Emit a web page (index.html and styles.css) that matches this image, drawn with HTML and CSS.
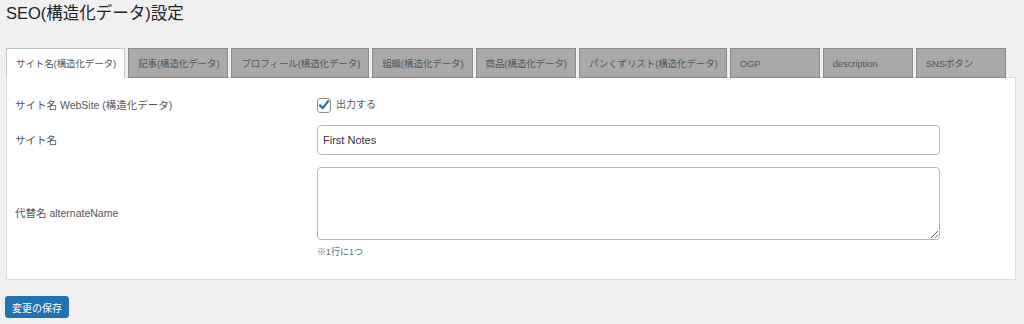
FILE: index.html
```html
<!DOCTYPE html>
<html lang="ja">
<head>
    <meta charset="UTF-8">
    <meta name="viewport" content="width=device-width, initial-scale=1.0">
    <title>SEO(構造化データ)設定</title>
    <link rel="stylesheet" href="styles.css">
</head>
<body>
    <div class="wrap">
        <h1>SEO(構造化データ)設定</h1>

        <nav class="tabs">
            <span class="tab active">サイト名(構造化データ)</span>
            <span class="tab">記事(構造化データ)</span>
            <span class="tab">プロフィール(構造化データ)</span>
            <span class="tab">組織(構造化データ)</span>
            <span class="tab">商品(構造化データ)</span>
            <span class="tab">パンくずリスト(構造化データ)</span>
            <span class="tab wide">OGP</span>
            <span class="tab wide">description</span>
            <span class="tab wide">SNSボタン</span>
        </nav>

        <div class="panel">
            <div class="form-table">
                <div class="label">サイト名 WebSite (構造化データ)</div>
                <div class="field">
                    <label class="check">
                        <span class="box">
                            <svg width="12" height="12" viewBox="0 0 12 12"><path d="M2 6.4 L4.8 9.2 L10.2 2.2" fill="none" stroke="#2271b1" stroke-width="2.2" stroke-linecap="round" stroke-linejoin="round"/></svg>
                        </span>
                        出力する
                    </label>
                </div>

                <div class="label">サイト名</div>
                <div class="field">
                    <input type="text" class="text-input" value="First Notes">
                </div>

                <div class="label">代替名 alternateName</div>
                <div class="field">
                    <textarea class="text-area"></textarea>
                    <p class="note">※1行に1つ</p>
                </div>
            </div>
        </div>

        <button class="save">変更の保存</button>
    </div>
</body>
</html>
```

FILE: styles.css
```css
body {
    margin: 0;
    background-color: #f0f0f1;
    font-family: "Liberation Sans", "Noto Sans CJK JP", sans-serif;
    color: #3c434a;
}
.wrap {
    padding: 0 8px 0 6px;
}
h1 {
    margin: 0;
    padding-top: 2px;
    font-size: 16.5px;
    font-weight: 400;
    line-height: 22px;
    color: #1d2327;
}
.tabs {
    display: flex;
    gap: 3px;
    margin-top: 24px;
    position: relative;
    z-index: 1;
}
.tab {
    box-sizing: border-box;
    flex-shrink: 0;
    white-space: nowrap;
    height: 30px;
    padding: 0 8px 0 9px;
    display: flex;
    align-items: center;
    font-size: 9.5px;
    letter-spacing: -0.1px;
    color: #50575e;
    background-color: #a9a9a9;
    border: 1px solid #8a8a8a;
    margin-bottom: -1px;
}
.tab.wide {
    width: 90px;
}
.tab.active {
    background-color: #fff;
    border-color: #c3c4c7;
    border-bottom-color: #fff;
}
.panel {
    background-color: #fff;
    border: 1px solid #dcdcde;
    padding: 19px 8px 21px 8px;
}
.form-table {
    display: grid;
    grid-template-columns: 302px 1fr;
    row-gap: 12px;
    align-items: center;
}
.label {
    font-size: 10.5px;
    line-height: 16px;
    color: #50575e;
}
.check {
    display: flex;
    align-items: center;
    gap: 5px;
    font-size: 10px;
    line-height: 16px;
    color: #50575e;
}
.box {
    box-sizing: border-box;
    width: 14px;
    height: 15px;
    border: 1px solid #8c8f94;
    border-radius: 3px;
    display: flex;
    align-items: center;
    justify-content: center;
    background-color: #fff;
}
.text-input, .text-area {
    box-sizing: border-box;
    display: block;
    width: 623px;
    border: 1px solid #b4b6b9;
    border-radius: 4px;
    font-family: "Liberation Sans", "Noto Sans CJK JP", sans-serif;
    color: #2c3338;
    background-color: #fff;
}
.text-input {
    height: 30px;
    padding: 0 5px;
    font-size: 11px;
}
.text-area {
    height: 73px;
    resize: vertical;
}
.note {
    margin: 6px 0 0 0;
    font-size: 9px;
    line-height: 12px;
    color: #646970;
}
.save {
    margin-top: 16px;
    margin-left: -1px;
    height: 22px;
    padding: 0 6px;
    font-family: "Liberation Sans", "Noto Sans CJK JP", sans-serif;
    font-size: 10px;
    color: #fff;
    background-color: #2271b1;
    border: 1px solid #2271b1;
    border-radius: 3px;
    cursor: pointer;
}
```
